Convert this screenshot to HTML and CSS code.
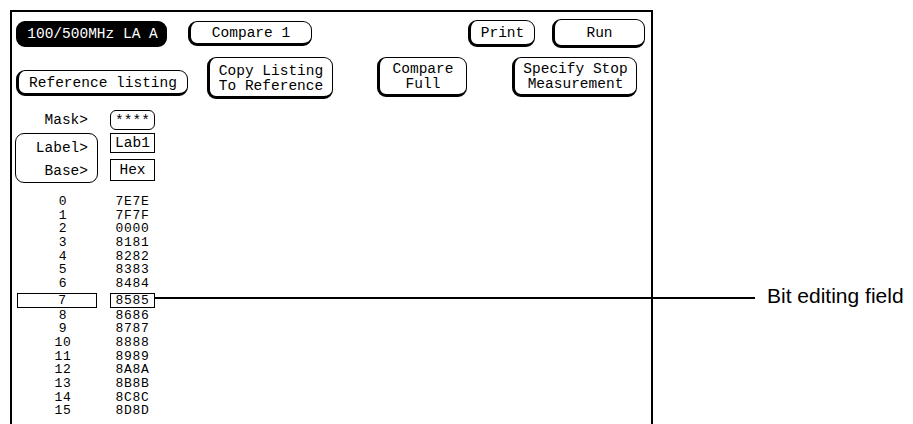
FILE: index.html
```html
<!DOCTYPE html>
<html lang="en">
<head>
  <meta charset="UTF-8">
  <title>Reference listing</title>
  <link rel="stylesheet" href="styles.css">
</head>
<body>
  <div class="screen">
    <div class="row top-row">
      <div class="key key-dark w-la">100/500MHz LA A</div>
      <div class="key w-cmp1">Compare 1</div>
      <div class="key w-print">Print</div>
      <div class="key w-run">Run</div>
    </div>

    <div class="row menu-row">
      <div class="key w-ref">Reference listing</div>
      <div class="key w-copy">Copy Listing<br>To Reference</div>
      <div class="key w-full">Compare<br>Full</div>
      <div class="key w-stop">Specify Stop<br>Measurement</div>
    </div>

    <div class="listing">
      <div class="cell-label">Mask&gt;</div>
      <div class="mask">****</div>

      <div class="label-box">
        <span>Label&gt;</span>
        <span>Base&gt;</span>
      </div>
      <div class="fields">
        <div class="field">Lab1</div>
        <div class="field field-hex">Hex</div>
      </div>

      <div class="data" id="data"></div>
    </div>
  </div>

  <div class="callout-line"></div>
  <div class="callout-text">Bit editing field</div>

  <script>
    const values = ['7E7E', '7F7F', '0000', '8181', '8282', '8383', '8484', '8585',
                    '8686', '8787', '8888', '8989', '8A8A', '8B8B', '8C8C', '8D8D'];
    const data = document.getElementById('data');
    values.forEach((v, i) => {
      const n = document.createElement('div');
      const h = document.createElement('div');
      n.className = 'num';
      h.className = 'hex';
      if (i === 7) {
        n.classList.add('edit');
        h.classList.add('edit');
      }
      n.textContent = i;
      h.textContent = v;
      data.appendChild(n);
      data.appendChild(h);
    });
  </script>
</body>
</html>
```

FILE: styles.css
```css
body {
  margin: 0;
  background-color: #fff;
  color: #000;
  font-family: "Liberation Mono", "DejaVu Sans Mono", monospace;
  font-size: 14.5px;
  overflow: hidden;
}

.screen {
  margin: 10px 0 0 10px;
  width: 639px;
  height: 430px;
  border: 2px solid #000;
  border-bottom: none;
}

.row {
  display: flex;
}

.top-row {
  margin-top: 9px;
  height: 26px;
}
.menu-row {
  margin-top: 10px;
  height: 42px;
}

.key {
  box-sizing: border-box;
  display: flex;
  align-items: center;
  justify-content: center;
  text-align: center;
  line-height: 15px;
  padding-top: 2px;
  border: 1px solid #000;
  border-left-width: 3px;
  border-bottom-width: 3px;
  border-radius: 9px;
  background-color: #fff;
  white-space: nowrap;
}
.key-dark {
  background-color: #000;
  color: #fff;
}

.w-la { margin-left: 4px; width: 151px; }
.w-cmp1 { margin-left: 21px; width: 124px; height: 25px; }
.w-print { margin-left: 156px; width: 67px; height: 27px; margin-top: -1px; }
.w-run { margin-left: 17px; width: 93px; height: 29px; margin-top: -2px; }

.w-ref { margin-left: 4px; width: 172px; height: 26px; align-self: flex-end; margin-bottom: 3px; }
.w-copy { margin-left: 19px; width: 126px; padding-top: 3px; }
.w-full { margin-left: 44px; width: 90px; height: 40px; }
.w-stop { margin-left: 45px; width: 125px; height: 40px; }

.listing {
  display: grid;
  grid-template-columns: 83px 45px;
  column-gap: 12px;
  margin: 10px 0 0 3px;
}

.cell-label {
  text-align: right;
  padding-right: 10px;
  line-height: 19px;
  padding-top: 2px;
}

.mask {
  box-sizing: border-box;
  height: 20px;
  line-height: 20px;
  margin-top: 1px;
  border: 1px solid #000;
  border-radius: 6px;
  text-align: center;
}

.label-box {
  box-sizing: border-box;
  margin-top: 3px;
  height: 50px;
  border: 1px solid #000;
  border-radius: 9px;
  display: flex;
  flex-direction: column;
  justify-content: space-around;
  align-items: flex-end;
  padding: 2px 9px 0 0;
}

.fields {
  margin-top: 3px;
  display: flex;
  flex-direction: column;
  gap: 6px;
}
.field {
  box-sizing: border-box;
  height: 20px;
  line-height: 18px;
  border: 1px solid #000;
  text-align: center;
}
.field-hex {
  height: 22px;
  line-height: 21px;
}

.data {
  grid-column: 1 / 3;
  display: grid;
  grid-template-columns: 83px 45px;
  column-gap: 12px;
  margin-top: 12px;
  font-size: 13px;
  letter-spacing: 0.7px;
  line-height: 13.67px;
}
.num {
  text-align: center;
  padding-left: 13px;
}
.hex {
  text-align: center;
}
.edit {
  box-sizing: border-box;
  border: 1px solid #000;
  height: 15px;
  line-height: 13px;
  margin: 2px 0 1px;
}
.num.edit {
  margin-left: 2px;
  margin-right: 1px;
  padding-left: 11px;
}

.callout-line {
  position: absolute;
  left: 155px;
  top: 297px;
  width: 600px;
  height: 2px;
  background-color: #000;
}
.callout-text {
  position: absolute;
  left: 767px;
  top: 284px;
  font-family: "Liberation Sans", Arial, sans-serif;
  font-size: 21px;
}
```
